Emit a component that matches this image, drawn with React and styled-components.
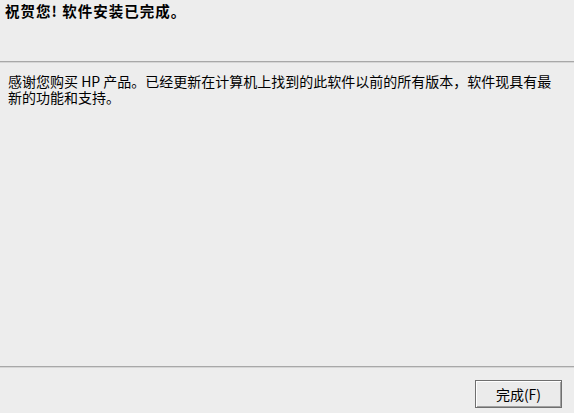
import React from 'react';
import styled, { createGlobalStyle } from 'styled-components';

const GlobalStyle = createGlobalStyle`
  html, body {
    margin: 0;
    padding: 0;
    background: #ffffff;
  }
  body {
    font-family: "Noto Sans CJK SC", "Liberation Sans", sans-serif;
    color: #000;
  }
`;

const Window = styled.div`
  width: 574px;
  height: 413px;
  background: #ededed;
  display: flex;
  flex-direction: column;
`;

const Header = styled.div`
  height: 61px;
  box-sizing: border-box;
  padding: 2px 0 0 5px;
`;

const Title = styled.div`
  font-size: 14.5px;
  font-weight: bold;
  line-height: 18px;
  letter-spacing: 1px;
`;

const Divider = styled.div`
  height: 1px;
  background: #a8a8a8;
  border-bottom: 1px solid #d6d6d6;
`;

const Body = styled.div`
  flex: 1;
  padding: 10px 12px 0 8px;
`;

const Message = styled.p`
  margin: 0;
  font-size: 14px;
  line-height: 16px;
`;

const Footer = styled.div`
  height: 45px;
  box-sizing: border-box;
  display: flex;
  justify-content: flex-end;
  align-items: flex-start;
  padding: 12px 12px 0 0;
`;

const Button = styled.button`
  width: 87px;
  height: 28px;
  box-sizing: border-box;
  background: #ebebeb;
  border: 1px solid #6f6f6f;
  box-shadow: inset 1px 1px 0 #ffffff, inset -1px -1px 0 #a0a0a0;
  font-family: inherit;
  font-size: 14px;
  line-height: 16px;
  padding: 0;
  color: #000;
  cursor: pointer;
`;

const App = () => {
  return (
    <>
      <GlobalStyle />
      <Window>
        <Header>
          <Title>祝贺您! 软件安装已完成。</Title>
        </Header>
        <Divider />
        <Body>
          <Message>
            感谢您购买 HP 产品。已经更新在计算机上找到的此软件以前的所有版本，软件现具有最新的功能和支持。
          </Message>
        </Body>
        <Divider />
        <Footer>
          <Button>完成(F)</Button>
        </Footer>
      </Window>
    </>
  );
};

export default App;
